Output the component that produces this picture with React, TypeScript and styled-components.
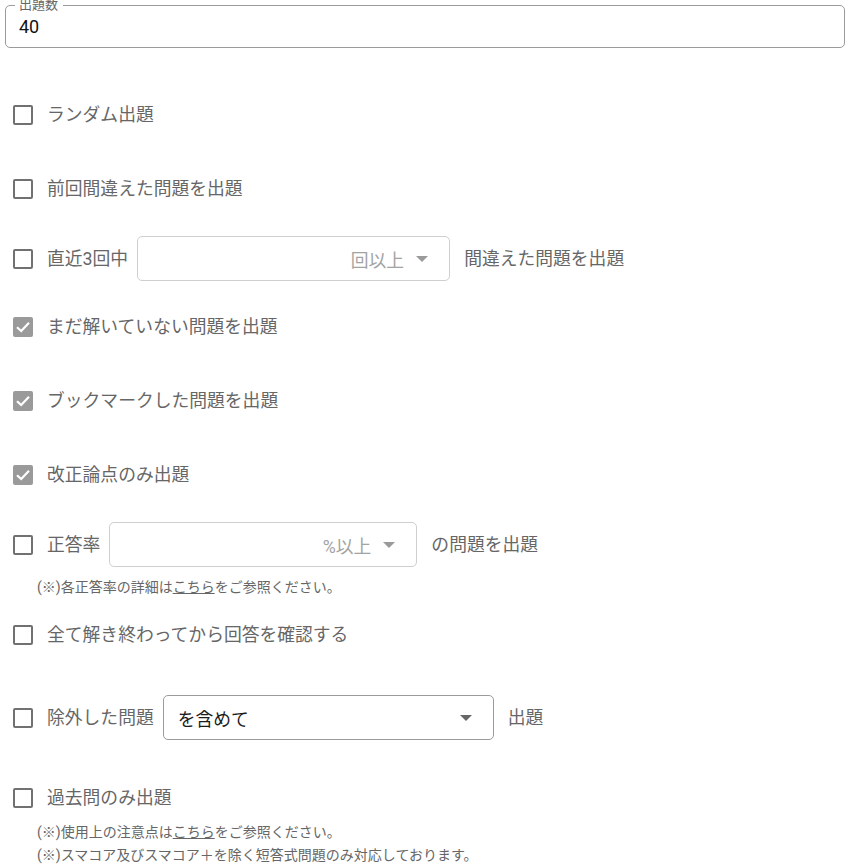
import styled, { createGlobalStyle } from "styled-components";

const GlobalStyle = createGlobalStyle`
  html, body {
    margin: 0;
    padding: 0;
    background: #fff;
  }
  body {
    font-family: Roboto, "Noto Sans CJK JP", sans-serif;
  }
`

const App = () => {
    return (
        <>
            <GlobalStyle/>
            <Page>
                <CountField>
                    <CountLegend>出題数</CountLegend>
                    <CountValue>40</CountValue>
                </CountField>

                <Row $top={46}>
                    <Check/>
                    <Label>ランダム出題</Label>
                </Row>
                <Row $top={32}>
                    <Check/>
                    <Label>前回間違えた問題を出題</Label>
                </Row>
                <Row $top={26}>
                    <Check/>
                    <Label>直近3回中</Label>
                    <Select $width={313} $disabled>
                        <SelectValue $placeholder>回以上</SelectValue>
                        <Arrow/>
                    </Select>
                    <Label $after>間違えた問題を出題</Label>
                </Row>
                <Row $top={25}>
                    <Check checked/>
                    <Label>まだ解いていない問題を出題</Label>
                </Row>
                <Row $top={32}>
                    <Check checked/>
                    <Label>ブックマークした問題を出題</Label>
                </Row>
                <Row $top={32}>
                    <Check checked/>
                    <Label>改正論点のみ出題</Label>
                </Row>
                <Row $top={26}>
                    <Check/>
                    <Label>正答率</Label>
                    <Select $width={308} $disabled>
                        <SelectValue $placeholder>%以上</SelectValue>
                        <Arrow/>
                    </Select>
                    <Label $after>の問題を出題</Label>
                </Row>
                <Note $top={9}>(※)各正答率の詳細は<NoteLink>こちら</NoteLink>をご参照ください。</Note>
                <Row $top={15}>
                    <Check/>
                    <Label>全て解き終わってから回答を確認する</Label>
                </Row>
                <Row $top={39}>
                    <Check/>
                    <Label>除外した問題</Label>
                    <Select $width={331} $left>
                        <SelectValue>を含めて</SelectValue>
                        <Arrow $dark/>
                    </Select>
                    <Label $after>出題</Label>
                </Row>
                <Row $top={37}>
                    <Check/>
                    <Label>過去問のみ出題</Label>
                </Row>
                <Note $top={2}>(※)使用上の注意点は<NoteLink>こちら</NoteLink>をご参照ください。</Note>
                <Note $top={0}>(※)スマコア及びスマコア＋を除く短答式問題のみ対応しております。</Note>
            </Page>
        </>
    );
};

const Check = ({checked}: { checked?: boolean }) => (
    <CheckBox $checked={checked}>
        {checked && (
            <svg width="16" height="16" viewBox="0 0 16 16">
                <polyline points="2,8.2 6.2,12 14,3.8" fill="none" stroke="#fff" strokeWidth="2.2"/>
            </svg>
        )}
    </CheckBox>
)

const Arrow = ({$dark}: { $dark?: boolean }) => (
    <svg width="12" height="6" viewBox="0 0 12 6">
        <polygon points="0,0 12,0 6,6" fill={$dark ? "#666" : "#9a9a9a"}/>
    </svg>
)

const Page = styled.div`
  padding: 0 4px 10px 5px;
  display: flex;
  flex-direction: column;
`

const CountField = styled.fieldset`
  margin: 0;
  border: 1px solid #9b9b9b;
  border-radius: 5px;
  padding: 6px 13px 9px;
  min-width: 0;
`

const CountLegend = styled.legend`
  margin-left: -4px;
  padding: 0 5px 0 4px;
  font-size: 13px;
  line-height: 10px;
  color: #666;
`

const CountValue = styled.div`
  font-size: 18px;
  line-height: 22px;
  color: #111;
`

const Row = styled.div<{ $top: number }>`
  display: flex;
  align-items: center;
  min-height: 42px;
  margin-top: ${({$top}) => $top}px;
`

const CheckBox = styled.span<{ $checked?: boolean }>`
  box-sizing: border-box;
  width: 20px;
  height: 20px;
  margin: 0 14px 0 8px;
  border-radius: 2px;
  border: 2px solid ${({$checked}) => $checked ? "#9a9a9a" : "#717171"};
  background: ${({$checked}) => $checked ? "#9a9a9a" : "#fff"};
  display: flex;
  align-items: center;
  justify-content: center;
  flex-shrink: 0;
`

const Label = styled.span<{ $after?: boolean }>`
  font-size: 17.8px;
  line-height: 24px;
  color: #666;
  white-space: nowrap;
  margin-left: ${({$after}) => $after ? "14px" : "0"};
`

const Select = styled.div<{ $width: number, $disabled?: boolean, $left?: boolean }>`
  box-sizing: border-box;
  width: ${({$width}) => $width}px;
  height: 45px;
  margin-left: 9px;
  border: 1px solid ${({$disabled}) => $disabled ? "#cfcfcf" : "#9b9b9b"};
  border-radius: 5px;
  display: flex;
  align-items: center;
  justify-content: ${({$left}) => $left ? "space-between" : "flex-end"};
  gap: 12px;
  padding: 0 21px 0 14px;
`

const SelectValue = styled.span<{ $placeholder?: boolean }>`
  font-size: 17.8px;
  color: ${({$placeholder}) => $placeholder ? "#a3a3a3" : "#1c1c1c"};
`

const Note = styled.div<{ $top: number }>`
  margin-top: ${({$top}) => $top}px;
  padding-left: 32px;
  font-size: 14px;
  line-height: 23px;
  color: #666;
`

const NoteLink = styled.a`
  color: #666;
  text-decoration: underline;
  cursor: pointer;
`

export default App;
